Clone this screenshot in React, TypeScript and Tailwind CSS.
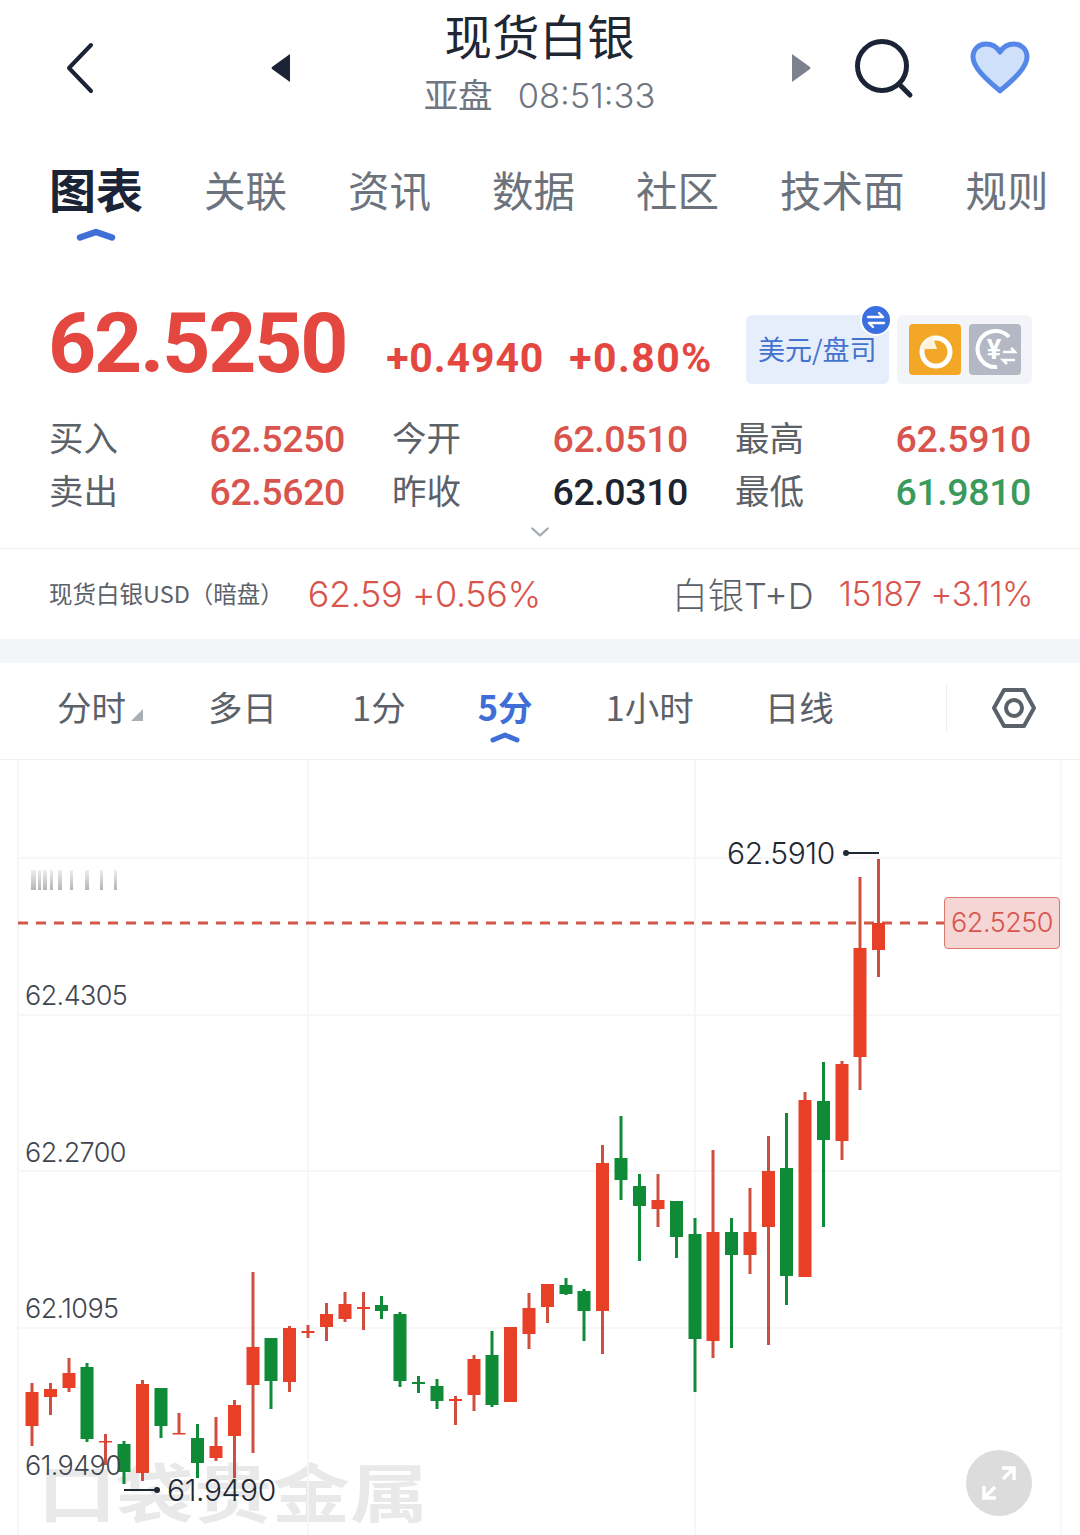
import { ChevronDown } from 'lucide-react'

type Candle = [number, number, number, number, number, 'r' | 'g']

// x, wick top, body top, body bottom, wick bottom (page pixels)
const candles: Candle[] = [
  [32, 1383, 1392, 1426, 1446, 'r'],
  [50.5, 1383, 1389, 1397, 1415, 'r'],
  [69, 1358, 1373, 1388, 1392, 'r'],
  [87, 1363, 1367, 1439, 1442, 'g'],
  [105.5, 1434, 1441, 1442, 1465, 'r'],
  [124, 1441, 1444, 1472, 1484, 'g'],
  [142.5, 1380, 1384, 1473, 1481, 'r'],
  [161, 1388, 1388, 1426, 1438, 'g'],
  [179, 1413, 1433, 1434, 1434, 'r'],
  [197.5, 1424, 1438, 1463, 1478, 'g'],
  [216, 1417, 1446, 1458, 1461, 'r'],
  [234.5, 1400, 1405, 1436, 1478, 'r'],
  [253, 1272, 1347, 1385, 1453, 'r'],
  [271, 1338, 1338, 1381, 1409, 'g'],
  [289.5, 1326, 1328, 1382, 1392, 'r'],
  [308, 1325, 1331, 1333, 1338, 'r'],
  [326.5, 1303, 1314, 1327, 1341, 'r'],
  [345, 1292, 1304, 1319, 1322, 'r'],
  [363.5, 1292, 1307, 1309, 1330, 'r'],
  [381.5, 1296, 1305, 1311, 1319, 'g'],
  [400, 1312, 1314, 1381, 1387, 'g'],
  [418.5, 1376, 1382, 1384, 1393, 'g'],
  [437, 1379, 1386, 1401, 1409, 'g'],
  [455.5, 1396, 1399, 1401, 1425, 'r'],
  [474, 1355, 1359, 1395, 1411, 'r'],
  [492, 1331, 1355, 1405, 1407, 'g'],
  [510.5, 1327, 1327, 1402, 1402, 'r'],
  [529, 1293, 1308, 1334, 1349, 'r'],
  [547.5, 1284, 1284, 1307, 1323, 'r'],
  [566, 1278, 1285, 1294, 1295, 'g'],
  [584, 1289, 1291, 1311, 1341, 'g'],
  [602.5, 1145, 1163, 1311, 1354, 'r'],
  [621, 1116, 1158, 1180, 1200, 'g'],
  [639.5, 1174, 1186, 1206, 1261, 'g'],
  [658, 1174, 1200, 1209, 1227, 'r'],
  [676.5, 1201, 1201, 1237, 1258, 'g'],
  [695, 1218, 1234, 1339, 1392, 'g'],
  [713, 1150, 1232, 1341, 1358, 'r'],
  [731.5, 1218, 1232, 1255, 1348, 'g'],
  [750, 1188, 1232, 1255, 1274, 'r'],
  [768.5, 1136, 1171, 1227, 1345, 'r'],
  [786.5, 1113, 1168, 1276, 1305, 'g'],
  [805, 1092, 1100, 1277, 1277, 'r'],
  [823.5, 1062, 1101, 1140, 1227, 'g'],
  [842, 1061, 1064, 1141, 1160, 'r'],
  [860, 877, 948, 1057, 1090, 'r'],
  [878.5, 859, 923, 950, 977, 'r'],
]

const tabs = ['关联', '资讯', '数据', '社区', '技术面', '规则']

const quotes = [
  { label: '买入', value: '62.5250', color: 'text-[#d8544c]' },
  { label: '今开', value: '62.0510', color: 'text-[#d8544c]' },
  { label: '最高', value: '62.5910', color: 'text-[#d8544c]' },
  { label: '卖出', value: '62.5620', color: 'text-[#d8544c]' },
  { label: '昨收', value: '62.0310', color: 'text-[#1c2430]' },
  { label: '最低', value: '61.9810', color: 'text-[#3a9a5c]' },
]

const axis = [
  { label: '62.4305', cls: 'top-[218px]' },
  { label: '62.2700', cls: 'top-[375px]' },
  { label: '62.1095', cls: 'top-[531px]' },
  { label: '61.9490', cls: 'top-[688px]' },
]

function Caret() {
  return (
    <svg width="40" height="13" viewBox="0 0 40 13" className="block">
      <path d="M4 9.5 L20 4 L36 9.5" fill="none" stroke="#3f6fd6" strokeWidth="6.5" strokeLinecap="round" strokeLinejoin="round" />
    </svg>
  )
}

function Header() {
  return (
    <div className="flex h-[136px] items-center pl-[66px] pr-[49px]">
      <svg width="28" height="52" viewBox="0 0 28 52" className="mt-[-1px] shrink-0">
        <path d="M25 3 L3 26 L25 49" fill="none" stroke="#1b2436" strokeWidth="4" strokeLinecap="round" strokeLinejoin="round" />
      </svg>
      <svg width="20" height="28" viewBox="0 0 20 28" className="ml-[177px] shrink-0">
        <path d="M19 0 V28 L1 15 Q0 14 1 13 Z" fill="#1b2436" />
      </svg>
      <div className="mb-[11px] mr-[3px] flex-1 text-center">
        <div className="text-[47.5px] leading-[56px] text-[#1f2733]">现货白银</div>
        <div className="mt-[8px] text-[34.5px] leading-[44px] text-[#6f7680]">
          亚盘<span className="ml-[25px] font-['Inter',sans-serif] font-light">08:51:33</span>
        </div>
      </div>
      <svg width="20" height="28" viewBox="0 0 20 28" className="shrink-0">
        <path d="M1 0 V28 L19 15 Q20 14 19 13 Z" fill="#7b818d" />
      </svg>
      <svg width="60" height="60" viewBox="0 0 60 60" className="ml-[44px] mt-[2px] shrink-0">
        <circle cx="27" cy="27" r="24.5" fill="none" stroke="#1b2436" strokeWidth="5" />
        <path d="M44 45 L55 56" stroke="#1b2436" strokeWidth="5" strokeLinecap="round" />
      </svg>
      <svg width="62" height="54" viewBox="0 0 62 54" className="ml-[54px] shrink-0">
        <path
          d="M31 50 C22 42 4 28 4 16 C4 8 10 3 17 3 C23 3 28 6 31 11 C34 6 39 3 45 3 C52 3 58 8 58 16 C58 28 40 42 31 50 Z"
          fill="#cfe0fb"
          stroke="#5587e8"
          strokeWidth="5"
          strokeLinejoin="round"
        />
      </svg>
    </div>
  )
}

function Tabs() {
  return (
    <div className="flex h-[130px] items-start pl-[49px] pt-[25px]">
      <div className="relative mr-[61px]">
        <div className="text-[47px] font-bold leading-[54px] text-[#1b2436]">图表</div>
        <div className="absolute left-[27px] top-[67px]">
          <Caret />
        </div>
      </div>
      <div className="flex gap-[61px] pt-[2px] text-[41.5px] leading-[52px] text-[#6c737c]">
        {tabs.map((t) => (
          <span key={t}>{t}</span>
        ))}
      </div>
    </div>
  )
}

function PriceRow() {
  return (
    <div className="flex h-[140px] items-start pl-[48px] pt-[28px]">
      <div className="font-['Roboto',sans-serif] text-[84px] font-bold leading-[100px] tracking-[-2.2px] text-[#e4473f]">62.5250</div>
      <div className="ml-[40px] mt-[39px] font-['Roboto',sans-serif] text-[41px] font-bold leading-[50px] tracking-[0.9px] text-[#e4473f]">+0.4940</div>
      <div className="ml-[25px] mt-[39px] font-['Roboto',sans-serif] text-[41px] font-bold leading-[50px] tracking-[1.4px] text-[#e4473f]">+0.80%</div>
      <div className="relative ml-[33px] mt-[21px] flex h-[69px] w-[143px] items-center justify-center rounded-[6px] bg-[#e6eefc] text-[27px] text-[#4472cf]">
        美元/盘司
        <div className="absolute right-[-3px] top-[-11px] flex h-[32px] w-[32px] items-center justify-center rounded-full border-2 border-white bg-[#3a70e0]">
          <svg width="20" height="18" viewBox="0 0 20 18">
            <path d="M2 6 H17 L13 2 M18 12 H3 L7 16" fill="none" stroke="#fff" strokeWidth="2.4" strokeLinecap="round" strokeLinejoin="round" />
          </svg>
        </div>
      </div>
      <div className="ml-[8px] mt-[21px] flex h-[69px] w-[135px] items-center gap-[8px] rounded-[6px] bg-[#f3f4f8] pl-[12px]">
        <div className="flex h-[51px] w-[52px] items-center justify-center rounded-[4px] bg-[#f2a826]">
          <svg width="40" height="40" viewBox="0 0 40 40">
            <circle cx="21" cy="22" r="14" fill="none" stroke="#fff" strokeWidth="5" />
            <path d="M5 19 L17 5 L22 19 Z" fill="#fdf3dc" />
          </svg>
        </div>
        <div className="flex h-[51px] w-[52px] items-center justify-center rounded-[4px] bg-[#b3b8c4]">
          <svg width="44" height="44" viewBox="0 0 44 44">
            <path d="M36 9 A18 18 0 1 0 24 39" fill="none" stroke="#fff" strokeWidth="4" />
            <text x="21" y="31" textAnchor="middle" fontSize="27" fontWeight="700" fill="#fff" fontFamily="Roboto, sans-serif">¥</text>
            <path d="M30 24 H42 L38 20 M42 32 H30 L34 36" fill="none" stroke="#fff" strokeWidth="2.6" />
          </svg>
        </div>
      </div>
    </div>
  )
}

function QuoteGrid() {
  return (
    <div className="h-[142px]">
      <div className="grid grid-cols-3 gap-x-[47px] pl-[49px] pr-[49px] pt-[6px]">
        {quotes.map((q) => (
          <div key={q.label} className="flex h-[53px] items-center justify-between">
            <span className="mt-[-6px] text-[34.5px] leading-[44px] text-[#5b6169]">{q.label}</span>
            <span className={`font-['Roboto',sans-serif] text-[37.5px] font-medium leading-[44px] tracking-[-0.4px] ${q.color}`}>{q.value}</span>
          </div>
        ))}
      </div>
      <div className="flex justify-center">
        <ChevronDown size={28} strokeWidth={2} className="scale-x-110 text-[#a9adb5]" />
      </div>
    </div>
  )
}

function Ticker() {
  return (
    <div className="flex h-[91px] items-center border-t border-[#f0f1f3] pl-[49px] pr-[47px]">
      <span className="text-[23.5px] text-[#5b6169]">现货白银USD（暗盘）</span>
      <span className="ml-[24px] font-['Inter',sans-serif] text-[36px] font-light tracking-[-0.4px] text-[#d8544c]">62.59 +0.56%</span>
      <span className="ml-auto font-['Inter',sans-serif] text-[36px] font-light text-[#5b6169]">
        <span className="font-['Noto_Sans_CJK_SC',sans-serif]">白银</span>T+D
      </span>
      <span className="ml-[25px] font-['Inter',sans-serif] text-[33.5px] font-light tracking-[-0.5px] text-[#d8544c]">15187 +3.11%</span>
    </div>
  )
}

function Periods() {
  return (
    <div className="flex h-[97px] items-center border-b border-[#f0f1f3] pb-[10px] text-[34.5px] leading-[44px] text-[#5b6169]">
      <span className="ml-[57px]">分时</span>
      <svg width="12" height="12" viewBox="0 0 12 12" className="ml-[5px] mt-[17px]">
        <path d="M12 0 V12 H0 Z" fill="#a9adb5" />
      </svg>
      <span className="ml-[65px]">多日</span>
      <span className="ml-[75px]">1分</span>
      <span className="relative ml-[72px] font-bold text-[#3f6fd6]">
        5分
        <span className="absolute left-[12px] top-[48px]">
          <svg width="30" height="11" viewBox="0 0 30 11" className="block">
            <path d="M3 8 L15 3 L27 8" fill="none" stroke="#3f6fd6" strokeWidth="5" strokeLinecap="round" strokeLinejoin="round" />
          </svg>
        </span>
      </span>
      <span className="ml-[73px]">1小时</span>
      <span className="ml-[71px]">日线</span>
      <div className="ml-[112px] mt-[4px] h-[46px] w-px bg-[#eceef0]" />
      <svg width="46" height="42" viewBox="0 0 46 42" className="ml-[44px] mt-[4px]">
        <path d="M13 3 H33 L43 21 L33 39 H13 L3 21 Z" fill="none" stroke="#5b6169" strokeWidth="4" strokeLinejoin="round" />
        <circle cx="23" cy="21" r="8" fill="none" stroke="#5b6169" strokeWidth="4" />
      </svg>
    </div>
  )
}

function Chart() {
  return (
    <div className="relative h-[775px] overflow-hidden">
      <div className="absolute left-[38px] top-[691px] scale-y-[0.82] text-[78px] font-bold leading-[76px] whitespace-nowrap text-[#e9e9e9]">
        口袋贵金属
      </div>
      <svg viewBox="0 760 1080 775" width="1080" height="775" className="absolute inset-0">
        <defs>
          <linearGradient id="smudge" x1="0" y1="0" x2="0" y2="1">
            <stop offset="0" stopColor="#eeeeee" />
            <stop offset="1" stopColor="#b5b5b5" />
          </linearGradient>
          <filter id="soft">
            <feGaussianBlur stdDeviation="0.7" />
          </filter>
        </defs>
        {[18, 308, 695, 1061].map((x) => (
          <line key={x} x1={x} x2={x} y1="760" y2="1535" stroke="#f5f5f6" strokeWidth="1.5" />
        ))}
        {[858, 1015, 1171, 1328].map((y) => (
          <line key={y} x1="18" x2="1061" y1={y} y2={y} stroke="#f5f5f6" strokeWidth="1.5" />
        ))}
        <g filter="url(#soft)">
          {[
            [31, 5],
            [38, 3],
            [43, 4],
            [50, 3],
            [58, 4],
            [70, 3],
            [85, 4],
            [100, 3],
            [114, 3],
          ].map(([x, w]) => (
            <rect key={x} x={x} y="870" width={w} height="20" fill="url(#smudge)" />
          ))}
        </g>
        <line x1="18" x2="945" y1="923" y2="923" stroke="#d2584b" strokeWidth="3" strokeDasharray="10 8" />
        {candles.map(([x, wt, bt, bb, wb, c]) => (
          <g key={x}>
            <rect x={x - 1.5} y={wt} width="3" height={wb - wt} fill={c === 'r' ? '#cf4f3f' : '#0f8a37'} />
            <rect x={x - 6.5} y={bt} width="13" height={Math.max(bb - bt, 1.5)} fill={c === 'r' ? '#e83f27' : '#0f8a37'} />
          </g>
        ))}
        <line x1="845" x2="879" y1="853" y2="853" stroke="#1f2733" strokeWidth="1.8" />
        <circle cx="846" cy="853" r="3" fill="#1f2733" />
        <line x1="124" x2="157" y1="1490" y2="1490" stroke="#1f2733" strokeWidth="1.8" />
        <circle cx="157" cy="1490" r="3" fill="#1f2733" />
      </svg>
      {axis.map((a) => (
        <div key={a.label} className={`absolute left-[25px] font-['Inter',sans-serif] text-[27px] font-light leading-[36px] tracking-[-0.6px] text-[#3f4650] ${a.cls}`}>
          {a.label}
        </div>
      ))}
      <div className="absolute left-[727px] top-[73px] font-['Inter',sans-serif] text-[30px] font-light leading-[40px] tracking-[-0.4px] text-[#1f2733]">62.5910</div>
      <div className="absolute left-[167px] top-[710px] font-['Inter',sans-serif] text-[30px] font-light leading-[40px] tracking-[-0.4px] text-[#1f2733]">61.9490</div>
      <div className="absolute left-[944px] top-[137px] flex h-[52px] w-[116px] items-center justify-center rounded-[4px] border border-[#d9776c] bg-[#f6d5d5] font-['Inter',sans-serif] text-[27px] font-light tracking-[-0.5px] text-[#d8544c]">
        62.5250
      </div>
      <div className="absolute left-[966px] top-[690px] flex h-[66px] w-[66px] items-center justify-center rounded-full bg-[#dcdcdc]">
        <svg width="38" height="38" viewBox="0 0 38 38">
          <path d="M22 4 H34 V16 M34 4 L23 15 M16 34 H4 V22 M4 34 L15 23" fill="none" stroke="#fff" strokeWidth="3.5" strokeLinejoin="miter" />
        </svg>
      </div>
    </div>
  )
}

export default function App() {
  return (
    <div className="h-[1535px] w-[1080px] overflow-hidden bg-white font-['Noto_Sans_CJK_SC',sans-serif] font-normal">
      <Header />
      <Tabs />
      <PriceRow />
      <QuoteGrid />
      <Ticker />
      <div className="h-[24px] bg-[#f4f5f9]" />
      <Periods />
      <Chart />
    </div>
  )
}
